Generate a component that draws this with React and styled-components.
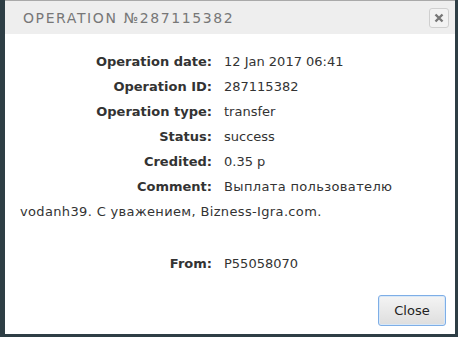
import React from "react";
import styled, { createGlobalStyle } from "styled-components";

const Global = createGlobalStyle`
  html, body { margin: 0; padding: 0; background: #2e3e45; }
  body { width: 458px; height: 337px; overflow: hidden; }
`;

const Dialog = styled.div`
  margin: 0 2px 0 5px;
  width: 450px;
  height: 334px;
  background: #fff;
  border-top: 1px solid #a9a9a9;
  display: flex;
  flex-direction: column;
  box-sizing: border-box;
  font-family: "DejaVu Sans", sans-serif;
`;

const TitleBar = styled.div`
  height: 33px;
  background: #eeeeee;
  display: flex;
  align-items: center;
  justify-content: space-between;
  padding: 0 6px 0 18px;
  flex-shrink: 0;
`;

const Title = styled.div`
  color: #777;
  font-size: 14px;
  letter-spacing: 1.6px;
  text-transform: uppercase;
`;

const CloseX = styled.button`
  width: 20px;
  height: 20px;
  border: 1px solid #cfcfcf;
  border-radius: 3px;
  background: #f2f2f2;
  padding: 0;
  display: flex;
  align-items: center;
  justify-content: center;
`;

const Content = styled.div`
  flex: 1;
  padding: 15px 15px 0 15px;
  color: #333;
  font-size: 13px;
  line-height: 25px;
`;

const Row = styled.div`
  margin-top: ${(p) => p.$gap || 0}px;
`;

const Label = styled.span`
  display: inline-block;
  width: 192px;
  text-align: right;
  font-weight: bold;
  color: #333;
  margin-right: 12px;
`;

const Value = styled.span`
  color: #333;
  letter-spacing: ${(p) => (p.$wide ? "0.35px" : "0")};
`;

const Footer = styled.div`
  display: flex;
  justify-content: flex-end;
  padding: 0 9px 8px 0;
`;

const Button = styled.button`
  width: 68px;
  height: 31px;
  border: 1px solid #7eaee6;
  border-radius: 3px;
  background: linear-gradient(#f4f4f4, #dedede);
  font-family: "DejaVu Sans", sans-serif;
  font-size: 13px;
  color: #222;
  box-shadow: inset 0 0 0 1px #d8e8f8;
`;

const rows = [
  ["Operation date:", "12 Jan 2017 06:41"],
  ["Operation ID:", "287115382"],
  ["Operation type:", "transfer"],
  ["Status:", "success"],
  ["Credited:", "0.35 р"],
  ["Comment:", "Выплата пользователю vodanh39. С уважением, Bizness-Igra.com.", true],
];

export default function App() {
  return (
    <>
      <Global />
      <Dialog>
        <TitleBar>
          <Title>Operation №287115382</Title>
          <CloseX aria-label="close">
            <svg width="10" height="10" viewBox="0 0 10 10">
              <path d="M1.5 1.5 L8.5 8.5 M8.5 1.5 L1.5 8.5" stroke="#777" strokeWidth="2.4" />
            </svg>
          </CloseX>
        </TitleBar>
        <Content>
          {rows.map(([l, v, wide]) => (
            <Row key={l}>
              <Label>{l}</Label>
              <Value $wide={wide}>{v}</Value>
            </Row>
          ))}
          <Row $gap={27}>
            <Label>From:</Label>
            <Value>P55058070</Value>
          </Row>
        </Content>
        <Footer>
          <Button>Close</Button>
        </Footer>
      </Dialog>
    </>
  );
}
